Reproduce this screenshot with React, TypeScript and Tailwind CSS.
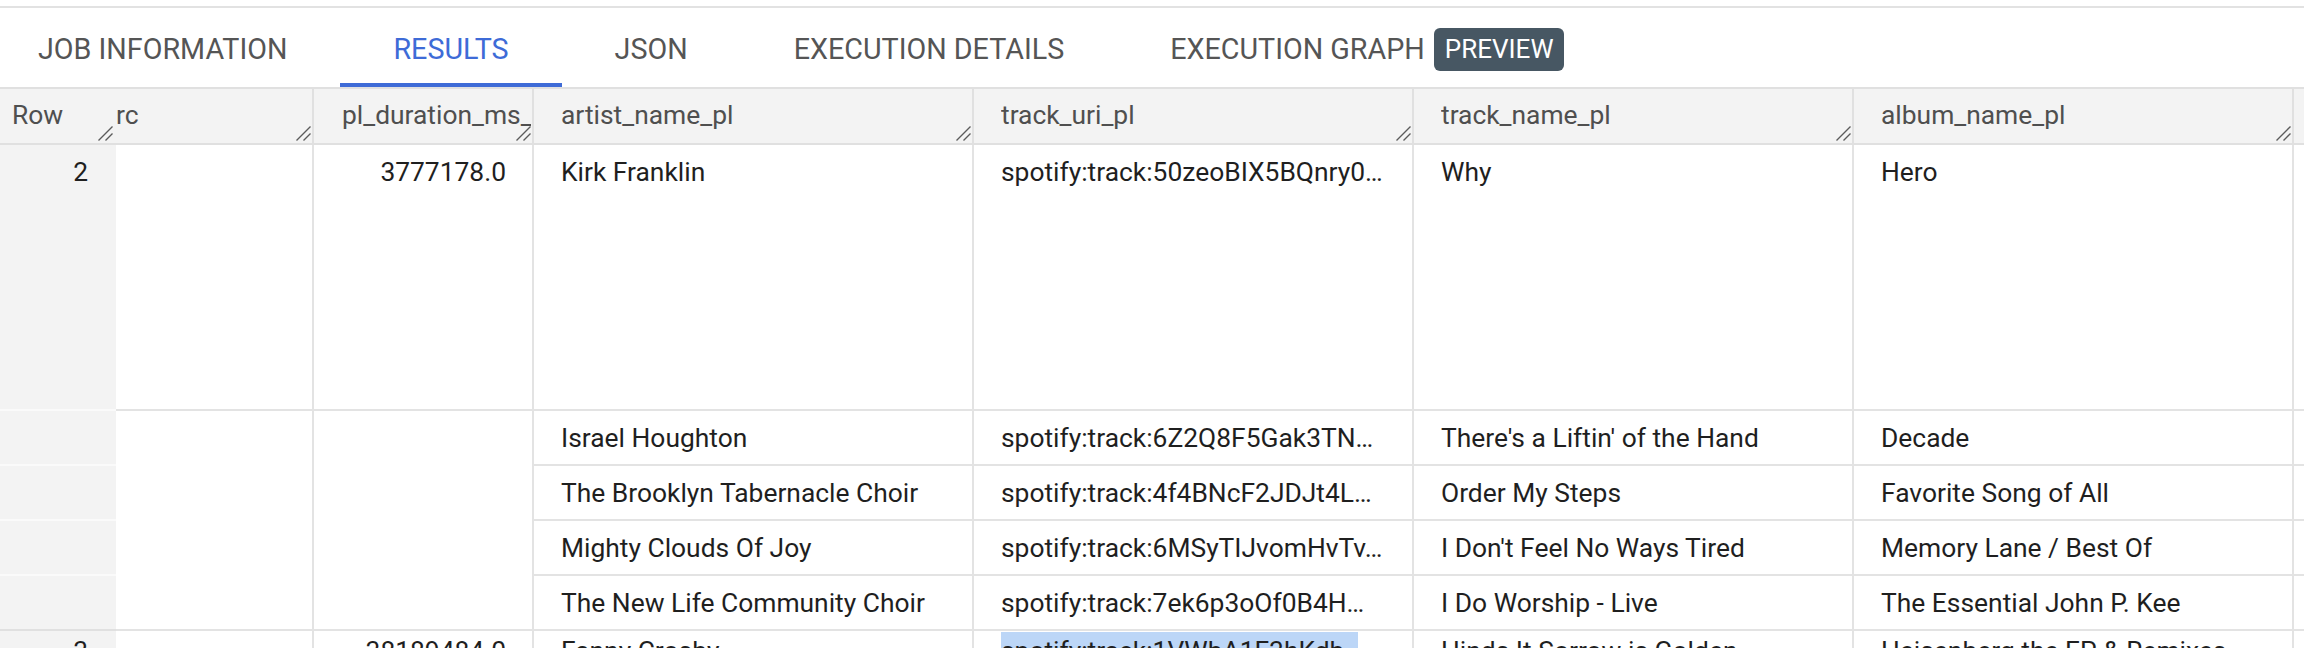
import React from "react";

const tabs = ["JOB INFORMATION", "RESULTS", "JSON", "EXECUTION DETAILS", "EXECUTION GRAPH"];

const gridCols = "grid grid-cols-[116px_198px_220px_440px_440px_440px_440px_1fr]";

const subRows = [
  ["Israel Houghton", "spotify:track:6Z2Q8F5Gak3TN…", "There's a Liftin' of the Hand", "Decade"],
  ["The Brooklyn Tabernacle Choir", "spotify:track:4f4BNcF2JDJt4L…", "Order My Steps", "Favorite Song of All"],
  ["Mighty Clouds Of Joy", "spotify:track:6MSyTIJvomHvTv…", "I Don't Feel No Ways Tired", "Memory Lane / Best Of"],
  ["The New Life Community Choir", "spotify:track:7ek6p3oOf0B4H…", "I Do Worship - Live", "The Essential John P. Kee"],
];

function ResizeHandle({ className = "" }: { className?: string }) {
  return (
    <svg width="15" height="15" viewBox="0 0 15 15" className={`shrink-0 self-end mb-[2px] ${className}`}>
      <path d="M0.5 14.5 L14.5 0.5 M7.5 14.5 L14.5 7.5" stroke="#5b5b5b" strokeWidth="1.4" fill="none" />
    </svg>
  );
}

function HeaderCell({ label, pad = "pl-[27px]" }: { label: string; pad?: string }) {
  return (
    <div className={`flex items-center border-r-2 border-[#e0e0e0] pr-[1px] ${pad}`}>
      <span className="flex-1 min-w-0 overflow-hidden whitespace-nowrap">{label}</span>
      <ResizeHandle className="-ml-[15px]" />
    </div>
  );
}

const cell = "border-r-2 border-b-2 border-[#e3e3e3] px-[27px] pt-[8px] leading-[38px] whitespace-nowrap overflow-hidden";
const rowCell = "bg-[#f3f3f3] border-b-2 text-right pr-[28px] pt-[8px] leading-[38px]";

export default function App() {
  return (
    <div className="w-[2304px] h-[648px] overflow-hidden bg-white font-['Roboto',sans-serif]">
      <div className="h-[6px]" />
      <div className="h-[2px] bg-[#e2e2e2]" />

      {/* tabs */}
      <div className="flex h-[81px] border-b-2 border-[#e0e0e0] text-[28.7px] text-[#555]">
        {tabs.map((t, i) => (
          <div
            key={t}
            className={`flex items-center h-full pt-[8px] border-b-4 ${i === 0 ? "pl-[38px] pr-[53px]" : "px-[53px]"} ${
              t === "RESULTS" ? "border-[#3e6bd7] text-[#3e6bd7]" : "border-transparent"
            }`}
          >
            <span>{t}</span>
            {t === "EXECUTION GRAPH" && (
              <span className="ml-[9px] h-[43px] px-[11px] flex items-center rounded-[6px] bg-[#475763] text-white text-[26px]">
                PREVIEW
              </span>
            )}
          </div>
        ))}
      </div>

      {/* column header */}
      <div className={`${gridCols} h-[56px] bg-[#f3f3f3] border-b-2 border-[#e0e0e0] text-[26.4px] text-[#4f4f4f]`}>
        <div className="flex items-center justify-between pl-[12px] pr-[3px]">
          <span>Row</span>
          <ResizeHandle />
        </div>
        <HeaderCell label="rc" pad="pl-0" />
        <HeaderCell label="pl_duration_ms_pl" pad="pl-[28px]" />
        <HeaderCell label="artist_name_pl" />
        <HeaderCell label="track_uri_pl" />
        <HeaderCell label="track_name_pl" />
        <HeaderCell label="album_name_pl" />
        <div />
      </div>

      {/* body */}
      <div className={`${gridCols} grid-rows-[266px_55px_55px_55px_55px_60px] text-[26.4px] text-[#1f1f1f]`}>
        {/* record 2 */}
        <div className={`${rowCell} border-[#fafafa]`}>2</div>
        <div className={cell} />
        <div className={`${cell} text-right pr-[26px]`}>3777178.0</div>
        <div className={cell}>Kirk Franklin</div>
        <div className={cell}>spotify:track:50zeoBIX5BQnry0…</div>
        <div className={cell}>Why</div>
        <div className={cell}>Hero</div>
        <div className={cell} />

        {subRows.map((r, i) => (
          <React.Fragment key={r[0]}>
            <div className={`${rowCell} ${i === subRows.length - 1 ? "border-[#e0e0e0]" : "border-[#fafafa]"}`} />
            {i === 0 && (
              <>
                <div className={`${cell} row-span-4`} />
                <div className={`${cell} row-span-4`} />
              </>
            )}
            {r.map((v) => (
              <div key={v} className={cell}>
                {v}
              </div>
            ))}
            <div className={cell} />
          </React.Fragment>
        ))}

        {/* record 3 */}
        <div className={`${rowCell} border-[#e0e0e0] !pt-[1px]`}>3</div>
        <div className={`${cell} !pt-[1px]`} />
        <div className={`${cell} text-right pr-[26px] !pt-[1px]`}>38189484.0</div>
        <div className={`${cell} !pt-[1px]`}>Fanny Crosby</div>
        <div className={`${cell} !pt-[1px]`}>
          <span className="inline-block w-[357px] overflow-hidden bg-[#bcd6f7]">spotify:track:1VWbA1F3hKdb</span>
        </div>
        <div className={`${cell} !pt-[1px]`}>Hinds It Sorrow is Golden</div>
        <div className={`${cell} !pt-[1px]`}>Heisenberg the EP &amp; Remixes</div>
        <div className={`${cell} !pt-[1px]`} />
      </div>
    </div>
  );
}
